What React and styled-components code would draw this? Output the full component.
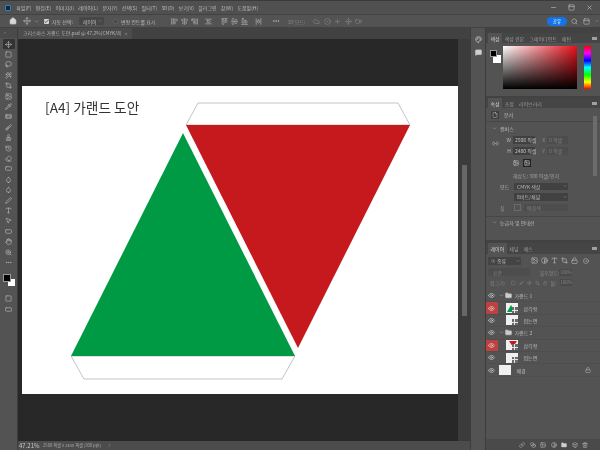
import React from 'react';
import styled, { createGlobalStyle } from 'styled-components';
import {
  Home, Move, Check, ChevronDown, ChevronRight, MoreHorizontal, Search, Eye, Folder, Lock, Link2, Square,
  Image as ImageIcon, CircleDot, Type, Crop, Contrast, Link, Plus, Trash2, FolderClosed, File,
  Cloud, Box, Video, Minus, X, PanelTop, AlignStartVertical, AlignCenterVertical, AlignEndVertical,
  AlignStartHorizontal, AlignCenterHorizontal, AlignEndHorizontal, AlignVerticalSpaceAround, AlignHorizontalSpaceAround,
  Lasso, Wand2, Pipette, Bandage, Brush, Stamp, History, Eraser, Droplet, Pen, MousePointer2,
  RectangleHorizontal, Hand, ZoomIn, MessageSquare, Palette, Blend
} from 'lucide-react';

const GlobalStyle = createGlobalStyle`
  html, body { margin: 0; padding: 0; background: #535353; }
  body { font-family: "Noto Sans CJK KR", "Liberation Sans", sans-serif; }
  * { box-sizing: border-box; }
`;

const Window = styled.div`
  width: 600px;
  height: 450px;
  overflow: hidden;
  display: flex;
  flex-direction: column;
  background: #535353;
  color: #bcbcbc;
  font-size: 5px;
  line-height: 1;
  white-space: nowrap;
  filter: blur(0.3px);
`;

const MenuBar = styled.div`
  height: 14px;
  flex: none;
  display: flex;
  align-items: center;
  gap: 4.2px;
  padding: 0 7px 0 5px;
  border-top: 1px solid #3a3a3a;
  background: #505050;
`;

const PsLogo = styled.div`
  width: 6px;
  height: 6px;
  margin-right: 1px;
  border-radius: 1px;
  background: #0f2a45;
  border: 1px solid #2f7fc7;
`;

const WinControls = styled.div`
  margin-left: auto;
  display: flex;
  gap: 11px;
  color: #c4c4c4;
`;

const OptionBar = styled.div`
  height: 14px;
  flex: none;
  display: flex;
  align-items: center;
  padding-left: 9px;
  border-top: 1px solid #424242;
  border-bottom: 1px solid #424242;
  background: #535353;
`;

const OptGroup = styled.div`
  display: flex;
  align-items: center;
  gap: ${(p) => p.$gap || 3}px;
  margin-left: ${(p) => p.$left || 0}px;
  color: ${(p) => p.$dim ? '#858585' : '#bcbcbc'};
`;

const AlignSlot = styled.span`
  display: flex;
  margin-left: ${(p) => p.$last ? 4 : 0}px;
`;

const CheckBox = styled.span`
  width: 5px;
  height: 5px;
  display: inline-flex;
  align-items: center;
  justify-content: center;
  border-radius: 1px;
  background: ${(p) => p.$on ? '#d8d8d8' : '#4a4a4a'};
  color: #333;
  border: ${(p) => p.$on ? 'none' : '1px solid #5d5d5d'};
`;

const OptSelect = styled.div`
  width: 25px;
  height: 8px;
  display: flex;
  align-items: center;
  justify-content: space-between;
  padding: 0 2px 0 4px;
  border-radius: 1px;
  background: #474747;
`;

const RightTools = styled.div`
  margin-left: auto;
  margin-right: 1.5px;
  display: flex;
  align-items: center;
  gap: 5px;
`;

const ShareButton = styled.div`
  width: 20px;
  height: 9px;
  margin-right: -1.5px;
  display: flex;
  align-items: center;
  justify-content: center;
  border-radius: 5px;
  background: #1473e6;
  color: #e8f0fb;
  font-size: 4.5px;
`;

const Main = styled.div`
  flex: 1;
  min-height: 0;
  display: flex;
`;

const ToolBar = styled.div`
  width: 18px;
  flex: none;
  display: flex;
  flex-direction: column;
  align-items: center;
  background: #535353;
  border-right: 1px solid #3c3c3c;
`;

const ToolHead = styled.div`
  width: 100%;
  height: 10px;
  flex: none;
  margin-bottom: 1px;
  background: #4a4a4a;
  color: #9a9a9a;
  font-size: 4px;
  padding: 2px 0 0 4px;
`;

const ToolBtn = styled.div`
  width: 12px;
  height: 10.4px;
  flex: none;
  display: flex;
  align-items: center;
  justify-content: center;
  color: #c0c0c0;
  border-radius: 1px;
  background: ${(p) => p.$active ? '#333' : 'transparent'};
`;

const ColorWell = styled.div`
  position: relative;
  width: 13px;
  height: 19px;
  flex: none;
  margin: 2px 0 5px;
`;

const Chip = styled.span`
  position: absolute;
  left: ${(p) => p.$x}px;
  top: ${(p) => p.$y}px;
  width: ${(p) => p.$s}px;
  height: ${(p) => p.$s}px;
  background: ${(p) => p.$c};
  border: ${(p) => p.$b ? '1px solid #999' : 'none'};
`;

const DocColumn = styled.div`
  width: 452px;
  flex: none;
  display: flex;
  flex-direction: column;
  background: #282828;
`;

const TabStrip = styled.div`
  height: 11px;
  flex: none;
  display: flex;
  background: #424242;
`;

const DocTab = styled.div`
  width: 114px;
  display: flex;
  align-items: center;
  justify-content: space-between;
  padding: 0 4px 0 5px;
  background: #4c4c4c;
  color: #b4b4b4;
  font-size: 4.9px;
`;

const CanvasRow = styled.div`
  flex: 1;
  min-height: 0;
  display: flex;
`;

const Pasteboard = styled.div`
  flex: 1;
  min-width: 0;
  padding: 47px 0 0 4px;
  background: #282828;
`;

const Paper = styled.div`
  position: relative;
  width: 436px;
  height: 308px;
  background: #fff;
`;

const PaperTitle = styled.div`
  position: absolute;
  left: 23px;
  top: 11px;
  color: #333;
  font-size: 13.7px;
  line-height: 20px;
  font-weight: 400;
`;

const VScroll = styled.div`
  width: 12px;
  flex: none;
  display: flex;
  flex-direction: column;
  align-items: center;
  padding-top: 126px;
  background: #3b3b3b;
`;

const VThumb = styled.div`
  width: 5px;
  height: 151px;
  background: #676767;
`;

const StatusBar = styled.div`
  height: 9px;
  flex: none;
  display: flex;
  align-items: center;
  padding-left: 1px;
  background: #4c4c4c;
  color: #a8a8a8;
  font-size: 4.2px;
`;

const ZoomText = styled.span`
  width: 24px;
  font-size: 6px;
  color: #c8c8c8;
`;

const Strip = styled.div`
  width: 16px;
  flex: none;
  display: flex;
  flex-direction: column;
  align-items: center;
  gap: 6px;
  padding-top: 8px;
  background: #535353;
  border-left: 1px solid #3c3c3c;
  border-right: 1px solid #3c3c3c;
  color: #d0d0d0;
`;

const Dock = styled.div`
  width: 114px;
  flex: none;
  display: flex;
  flex-direction: column;
  padding-top: 5px;
  background: #424242;
`;

const TabsRow = styled.div`
  height: ${(p) => p.$h || 10}px;
  flex: none;
  display: flex;
  align-items: stretch;
  padding-left: 2px;
  background: #454545;
  color: #a8a8a8;
`;

const PanelTab = styled.div`
  padding: 0 2.5px;
  display: flex;
  align-items: center;
  background: ${(p) => p.$on ? '#535353' : 'transparent'};
  color: ${(p) => p.$on ? '#d4d4d4' : '#9c9c9c'};
`;

const PanelMenu = styled.div`
  margin-left: auto;
  margin-right: 3px;
  align-self: center;
  width: 5px;
  height: 3px;
  background: #a0a0a0;
`;

const ColorBody = styled.div`
  height: 53px;
  flex: none;
  margin-bottom: 2px;
  display: flex;
  padding: 3px 0 0 4px;
  background: #535353;
`;

const Picker = styled.div`
  width: 74px;
  height: 43px;
  background:
    linear-gradient(to bottom, transparent, #000),
    linear-gradient(to right, #fff, #e5101a);
`;

const Hue = styled.div`
  width: 7px;
  height: 43px;
  margin-left: 7px;
  background: linear-gradient(to bottom, #f00 0%, #f0f 17%, #00f 34%, #0ff 50%, #0f0 67%, #ff0 84%, #f00 100%);
`;

const Props = styled.div`
  height: 132px;
  flex: none;
  margin-bottom: 3px;
  position: relative;
  background: #535353;
`;

const PropsScroll = styled.div`
  position: absolute;
  right: 3px;
  top: 8px;
  width: 4px;
  height: 60px;
  background: #6c6c6c;
`;

const DocRow = styled.div`
  height: 14px;
  display: flex;
  align-items: center;
  gap: 5px;
  padding-left: 5px;
  border-bottom: 1px solid #474747;
`;

const DocIcon = styled.span`
  width: 8px;
  height: 8px;
  display: inline-flex;
  align-items: center;
  justify-content: center;
  border-radius: 1px;
  background: #3e3e3e;
`;

const SectionHead = styled.div`
  height: 12px;
  display: flex;
  align-items: center;
  gap: 3px;
  padding-left: 6px;
  color: #bcbcbc;
`;

const FieldGrid = styled.div`
  display: grid;
  grid-template-columns: 27px 22px 12px 21px;
  grid-auto-rows: 11px;
  align-items: center;
  position: relative;
`;

const FieldLabel = styled.span`
  text-align: right;
  padding-right: 2px;
  color: ${(p) => p.$dim ? '#8c8c8c' : '#bdbdbd'};
`;

const Field = styled.div`
  height: 8px;
  display: flex;
  align-items: center;
  padding-left: 2px;
  background: ${(p) => p.$dim ? '#4d4d4d' : '#404040'};
  color: ${(p) => p.$dim ? '#7d7d7d' : '#c4c4c4'};
`;

const LinkMark = styled.span`
  position: absolute;
  left: 6px;
  top: 6px;
  color: #b0b0b0;
`;

const OrientRow = styled.div`
  height: 12px;
  display: flex;
  align-items: center;
  gap: 3px;
  padding-left: 26px;
  margin-top: 1px;
`;

const OrientBtn = styled.span`
  width: 8px;
  height: 8px;
  display: inline-flex;
  align-items: center;
  justify-content: center;
  background: ${(p) => p.$on ? '#333' : 'transparent'};
  color: #d4d4d4;
  border: ${(p) => p.$on ? '1px solid #222' : 'none'};
`;

const ResText = styled.div`
  height: 12px;
  display: flex;
  align-items: center;
  padding-left: 27px;
  color: #a0a0a0;
`;

const WideRow = styled.div`
  height: 10.5px;
  display: flex;
  align-items: center;
  padding-left: 14px;
`;

const RowLabel = styled.span`
  width: 14px;
  color: ${(p) => p.$dim ? '#8c8c8c' : '#bdbdbd'};
`;

const WideSelect = styled.div`
  width: 54px;
  height: 7.5px;
  display: flex;
  align-items: center;
  justify-content: space-between;
  padding: 0 1px 0 3px;
  background: #414141;
`;

const FillSwatch = styled.span`
  width: 7px;
  height: 7.5px;
  margin-right: 3px;
  border: 1px solid #6a6a6a;
`;

const FillField = styled.div`
  width: 44px;
  height: 7.5px;
  display: flex;
  align-items: center;
  padding-left: 3px;
  background: #4d4d4d;
  color: #7d7d7d;
`;

const SectionLine = styled.div`
  margin-top: 3px;
  border-top: 1px solid #474747;
`;

const Layers = styled.div`
  flex: 1;
  min-height: 0;
  display: flex;
  flex-direction: column;
  background: #535353;
`;

const LayerTools = styled.div`
  height: ${(p) => p.$h}px;
  flex: none;
  display: flex;
  align-items: center;
  gap: ${(p) => p.$gap || 0}px;
  padding-left: 2px;
  color: ${(p) => p.$dim ? '#858585' : '#c0c0c0'};
`;

const FilterBox = styled.div`
  width: 33px;
  height: 8px;
  display: flex;
  align-items: center;
  gap: 2px;
  padding: 0 1px 0 3px;
  margin-right: 7px;
  background: #444;
`;

const ModeBox = styled.div`
  width: 43px;
  height: 8px;
  margin-right: 10px;
  display: flex;
  align-items: center;
  padding-left: 5px;
  background: #4d4d4d;
  color: #7e7e7e;
`;

const PctBox = styled.div`
  width: 13px;
  height: 7px;
  margin-left: auto;
  margin-right: 28px;
  display: flex;
  align-items: center;
  justify-content: center;
  background: #4a4a4a;
  color: #808080;
  font-size: 4.5px;
`;

const LayerList = styled.div`
  flex: 1;
  min-height: 0;
  padding-top: 2px;
`;

const LayerRow = styled.div`
  height: 12.4px;
  display: flex;
  align-items: center;
  border-bottom: 1px solid #4e4e4e;
  color: #bcbcbc;
`;

const EyeCell = styled.div`
  width: 11.5px;
  height: 100%;
  flex: none;
  display: flex;
  align-items: center;
  justify-content: center;
  background: ${(p) => p.$red ? '#bb4240' : 'transparent'};
  color: ${(p) => p.$red ? '#f4dede' : '#d6d6d6'};
`;

const Thumb = styled.div`
  position: relative;
  width: 12px;
  height: 10px;
  flex: none;
  margin: 0 4px 0 ${(p) => p.$left}px;
  background: #f0f0f0;
`;

const SmartMark = styled.span`
  position: absolute;
  right: 0;
  bottom: 0;
  width: 6px;
  height: 6px;
  background:
    linear-gradient(#e4e4e4, #e4e4e4) center / 100% 1px no-repeat,
    linear-gradient(#e4e4e4, #e4e4e4) center / 1px 100% no-repeat,
    #6a6a6a;
`;

const LockMark = styled.span`
  margin-left: auto;
  margin-right: 9px;
  display: flex;
  color: #b6b6b6;
`;

const Footer = styled.div`
  height: 11px;
  flex: none;
  display: flex;
  align-items: center;
  justify-content: flex-end;
  gap: 4.5px;
  padding-right: 12px;
  background: #4a4a4a;
  color: #bdbdbd;
`;

const menus = ['파일(F)', '편집(E)', '이미지(I)', '레이어(L)', '문자(Y)', '선택(S)', '필터(T)', '3D(D)', '보기(V)', '플러그인', '창(W)', '도움말(H)'];
const alignA = [AlignStartVertical, AlignCenterVertical, AlignEndVertical, AlignVerticalSpaceAround];
const alignB = [AlignStartHorizontal, AlignCenterHorizontal, AlignEndHorizontal, AlignHorizontalSpaceAround];
const toolsTop = [Move, Square, Lasso, Wand2, Crop, ImageIcon, Pipette, Bandage, Brush, Stamp, History, Eraser, RectangleHorizontal, Droplet, Droplet, Pen, Type, MousePointer2, RectangleHorizontal, Hand, ZoomIn, MoreHorizontal];
const layers = [
  { group: true, name: '가랜드 1' },
  { name: '삼각형', red: true, art: 'green' },
  { name: '접는면' },
  { group: true, name: '가랜드 2' },
  { name: '삼각형', red: true, art: 'red' },
  { name: '접는면' },
];

const ThumbArt = ({ art }) => {
  if (art === 'green') {
    return <svg width="12" height="10" viewBox="0 0 12 10"><polygon points="1,9 5,2 9,9" fill="#009a44" /></svg>;
  }
  if (art === 'red') {
    return <svg width="12" height="10" viewBox="0 0 12 10"><polygon points="3,1 11,1 7,7" fill="#c5191e" /></svg>;
  }
  return null;
};

const Artwork = () => (
  <svg width="436" height="308" viewBox="0 0 436 308" style={{ display: 'block' }}>
    <polygon points="164,39 176,17 376,17 388,39" fill="#fff" stroke="#b4b4b4" strokeWidth="0.8" />
    <polygon points="49,270 62,293 260,293 273,270" fill="#fff" stroke="#b4b4b4" strokeWidth="0.8" />
    <polygon points="164,39 388,39 276,262" fill="#c5191e" />
    <polygon points="161,47 49,270 273,270" fill="#009a44" />
  </svg>
);

export default function App() {
  return (
    <>
      <GlobalStyle />
      <Window>
        <MenuBar>
          <PsLogo />
          {menus.map((m) => <span key={m}>{m}</span>)}
          <WinControls>
            <Minus size={7} />
            <PanelTop size={7} />
            <X size={7} />
          </WinControls>
        </MenuBar>

        <OptionBar>
          <Home size={8} fill="#d8d8d8" />
          <OptGroup $left={6} $gap={3}>
            <Move size={8} />
            <ChevronDown size={5} />
          </OptGroup>
          <OptGroup $left={5}>
            <CheckBox $on><Check size={5} strokeWidth={4} /></CheckBox>
            <span>자동 선택:</span>
          </OptGroup>
          <OptGroup $left={6}>
            <OptSelect>레이어<ChevronDown size={4} /></OptSelect>
          </OptGroup>
          <OptGroup $left={9}>
            <CheckBox />
            <span>변형 컨트롤 표시</span>
          </OptGroup>
          <OptGroup $left={16} $gap={3}>
            {alignA.map((Icon, i) => <AlignSlot key={i} $last={i === 3}><Icon size={7} /></AlignSlot>)}
          </OptGroup>
          <OptGroup $left={9} $gap={3}>
            {alignB.map((Icon, i) => <AlignSlot key={i} $last={i === 3}><Icon size={7} /></AlignSlot>)}
          </OptGroup>
          <OptGroup $left={10}>
            <MoreHorizontal size={8} />
          </OptGroup>
          <OptGroup $left={7} $dim>
            <span>3D 모드:</span>
          </OptGroup>
          <OptGroup $left={8} $gap={3.5} $dim>
            <Cloud size={7} />
            <CircleDot size={7} />
            <Plus size={7} />
            <Move size={7} />
            <Video size={7} />
          </OptGroup>
          <RightTools>
            <ShareButton>공유</ShareButton>
            <Search size={7} />
            <PanelTop size={7} />
            <ChevronDown size={4} />
          </RightTools>
        </OptionBar>

        <Main>
          <ToolBar>
            <ToolHead>»</ToolHead>
            {toolsTop.map((Icon, i) => (
              <ToolBtn key={i} $active={i === 0}>
                <Icon size={7} />
              </ToolBtn>
            ))}
            <ColorWell>
              <Chip $x={6} $y={9} $s={7} $c="#fff" />
              <Chip $x={1} $y={4} $s={8} $c="#000" $b />
            </ColorWell>
            <ToolBtn><Square size={7} /></ToolBtn>
            <ToolBtn><RectangleHorizontal size={7} /></ToolBtn>
          </ToolBar>

          <DocColumn>
            <TabStrip>
              <DocTab>
                <span>크리스마스 가랜드 도안.psd @ 47.2%(CMYK/8)</span>
                <X size={4} />
              </DocTab>
            </TabStrip>
            <CanvasRow>
              <Pasteboard>
                <Paper>
                  <Artwork />
                  <PaperTitle>[A4] 가랜드 도안</PaperTitle>
                </Paper>
              </Pasteboard>
              <VScroll><VThumb /></VScroll>
            </CanvasRow>
            <StatusBar>
              <ZoomText>47.21%</ZoomText>
              <span>2508 픽셀 x 2480 픽셀 (300 ppi)</span>
              <ChevronRight size={5} style={{ marginLeft: 6 }} />
            </StatusBar>
          </DocColumn>

          <Strip>
            <Palette size={7} />
            <MessageSquare size={7} fill="#d0d0d0" />
          </Strip>

          <Dock>
            <TabsRow>
              <PanelTab $on>색상</PanelTab>
              <PanelTab>색상 견본</PanelTab>
              <PanelTab>그레이디언트</PanelTab>
              <PanelTab>패턴</PanelTab>
              <PanelMenu />
            </TabsRow>
            <ColorBody>
              <ColorWell>
                <Chip $x={3} $y={7} $s={8} $c="#fff" />
                <Chip $x={0} $y={2} $s={7} $c="#000" $b />
              </ColorWell>
              <Picker />
              <Hue />
            </ColorBody>

            <TabsRow>
              <PanelTab $on>속성</PanelTab>
              <PanelTab>조정</PanelTab>
              <PanelTab>라이브러리</PanelTab>
              <PanelMenu />
            </TabsRow>
            <Props>
              <PropsScroll />
              <DocRow>
                <DocIcon><File size={6} /></DocIcon>
                <span>문서</span>
              </DocRow>
              <SectionHead><ChevronDown size={5} />캔버스</SectionHead>
              <FieldGrid>
                <LinkMark><Link2 size={7} /></LinkMark>
                <FieldLabel>W</FieldLabel>
                <Field>2508 픽셀</Field>
                <FieldLabel $dim>X</FieldLabel>
                <Field $dim>0 픽셀</Field>
                <FieldLabel>H</FieldLabel>
                <Field>2480 픽셀</Field>
                <FieldLabel $dim>Y</FieldLabel>
                <Field $dim>0 픽셀</Field>
              </FieldGrid>
              <OrientRow>
                <OrientBtn><ImageIcon size={6} /></OrientBtn>
                <OrientBtn $on><ImageIcon size={6} /></OrientBtn>
              </OrientRow>
              <ResText>해상도: 300 픽셀/인치</ResText>
              <WideRow>
                <RowLabel>모드</RowLabel>
                <WideSelect>CMYK 색상<ChevronDown size={4} /></WideSelect>
              </WideRow>
              <WideRow>
                <RowLabel />
                <WideSelect>8비트/채널<ChevronDown size={4} /></WideSelect>
              </WideRow>
              <WideRow>
                <RowLabel $dim>칠</RowLabel>
                <FillSwatch />
                <FillField>배경색</FillField>
              </WideRow>
              <SectionLine />
              <SectionHead><ChevronDown size={5} />눈금자 및 안내선</SectionHead>
            </Props>

            <TabsRow $h={11}>
              <PanelTab $on>레이어</PanelTab>
              <PanelTab>채널</PanelTab>
              <PanelTab>패스</PanelTab>
              <PanelMenu />
            </TabsRow>
            <Layers>
              <LayerTools $h={13} $gap={3}>
                <FilterBox><Search size={4} />종류<ChevronDown size={4} style={{ marginLeft: 'auto' }} /></FilterBox>
                <ImageIcon size={7} />
                <Contrast size={7} />
                <Type size={7} />
                <Crop size={7} />
                <Lock size={7} />
                <CircleDot size={6} style={{ marginLeft: 2 }} />
              </LayerTools>
              <LayerTools $h={10} $dim>
                <ModeBox>표준</ModeBox>
                <span>불투명도:</span>
                <PctBox>100%</PctBox>
              </LayerTools>
              <LayerTools $h={11} $gap={3} $dim>
                <span style={{ marginLeft: 2, marginRight: 3 }}>잠그기:</span>
                <Square size={6} />
                <Brush size={6} />
                <Move size={6} />
                <Crop size={6} />
                <Lock size={6} />
                <span>칠:</span>
                <PctBox style={{ marginLeft: 1 }}>100%</PctBox>
              </LayerTools>
              <LayerList>
                {layers.map((l, i) => (
                  <LayerRow key={i}>
                    <EyeCell $red={l.red}><Eye size={7} /></EyeCell>
                    {l.group ? (
                      <>
                        <ChevronDown size={5} style={{ margin: '0 1px 0 1px' }} />
                        <FolderClosed size={7} fill="#d0d0d0" style={{ marginRight: 3 }} />
                        <span>{l.name}</span>
                      </>
                    ) : (
                      <>
                        <Thumb $left={8}>
                          <ThumbArt art={l.art} />
                          <SmartMark />
                        </Thumb>
                        <span style={{ marginLeft: 2 }}>{l.name}</span>
                      </>
                    )}
                  </LayerRow>
                ))}
                <LayerRow>
                  <EyeCell><Eye size={7} /></EyeCell>
                  <Thumb $left={1} />
                  <span style={{ marginLeft: 2 }}>배경</span>
                  <LockMark><Lock size={6} /></LockMark>
                </LayerRow>
              </LayerList>
              <Footer>
                <Link size={6} />
                <Blend size={6} />
                <ImageIcon size={6} />
                <Contrast size={6} />
                <Folder size={6} fill="#d0d0d0" />
                <Box size={6} />
                <Trash2 size={6} />
              </Footer>
            </Layers>
          </Dock>
        </Main>
      </Window>
    </>
  );
}
